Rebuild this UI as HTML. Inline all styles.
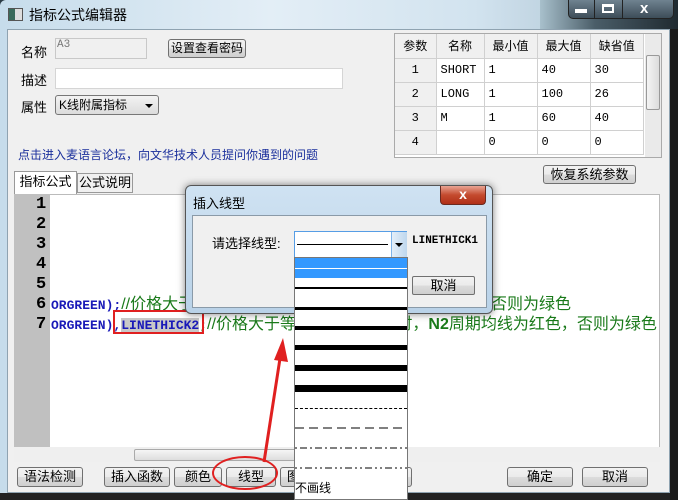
<!DOCTYPE html>
<html><head><meta charset="utf-8"><style>
*{margin:0;padding:0;box-sizing:border-box}
body{width:678px;height:500px;overflow:hidden;background:#2b3a44;font-family:"Liberation Sans","Noto Sans CJK SC",sans-serif;font-size:12px;position:relative}
.a{position:absolute}
.btn{position:absolute;border:1px solid #707070;border-radius:3px;background:linear-gradient(#f2f2f2,#ebebeb 50%,#dcdcdc 51%,#cfcfcf);text-align:center;font-size:13px;color:#000;white-space:nowrap;overflow:hidden}
.mono{font-family:"Liberation Mono","Noto Sans CJK SC",monospace}
td{border-right:1px solid #d0d0d0;border-bottom:1px solid #d0d0d0;height:24px;font-size:12px;padding-left:4px}
.cm{color:#1a7a1a;font-weight:normal;font-family:"Liberation Sans","Noto Sans CJK SC",sans-serif;font-size:16px}
</style></head><body>
<div class="a" style="left:0;top:0;width:678px;height:500px;background:linear-gradient(90deg,#c6dceb,#e3eef6 40%,#d2e3ef 70%,#9fb8c8);border-radius:6px 6px 0 0"></div>
<div class="a" style="left:540px;top:0;width:138px;height:30px;background:linear-gradient(90deg,#a8c0cc,#4a5d68 40%,#1f2a30)"></div>
<div class="a" style="left:8px;top:8px;width:15px;height:13px;border:1px solid #555;background:linear-gradient(90deg,#3a6a5a 45%,#ddd 45%)"></div>
<div class="a" style="left:29px;top:5px;font-size:14px;color:#000">指标公式编辑器</div>
<div class="a" style="left:568px;top:0;width:106px;height:19px;border:1px solid #222;border-top:none;border-radius:0 0 5px 5px;background:linear-gradient(#6f8290,#3d4d58)"></div>
<div class="a" style="left:594px;top:0;width:1px;height:19px;background:#222"></div>
<div class="a" style="left:622px;top:0;width:1px;height:19px;background:#222"></div>
<div class="a" style="left:575px;top:9px;width:12px;height:4px;background:#fff"></div>
<div class="a" style="left:602px;top:4px;width:12px;height:9px;border:2px solid #fff;border-top-width:3px"></div>
<div class="a" style="left:640px;top:0px;color:#fff;font-weight:bold;font-size:15px">x</div>
<div class="a" style="left:7px;top:29px;width:663px;height:464px;background:#f0f0f0;border:1px solid #8fa3b1"></div>
<div class="a" style="left:0;top:493px;width:678px;height:7px;background:#222"></div>
<div class="a" style="left:670px;top:29px;width:8px;height:471px;background:#1a1a1a"></div>

<div class="a" style="left:21px;top:42px;font-size:13px">名称</div>
<div class="a mono" style="left:55px;top:38px;width:92px;height:21px;border:1px solid #c8c8c8;background:#f0f0f0;color:#777;font-size:11px;padding-left:1px">A3</div>
<div class="btn" style="left:168px;top:39px;width:78px;height:19px;font-size:12px;line-height:17px">设置查看密码</div>
<div class="a" style="left:21px;top:70px;font-size:13px">描述</div>
<div class="a" style="left:55px;top:68px;width:288px;height:21px;border:1px solid #d5d5d5;background:#fff"></div>
<div class="a" style="left:21px;top:97px;font-size:13px">属性</div>
<div class="a" style="left:55px;top:95px;width:104px;height:20px;border:1px solid #777;border-radius:3px;background:linear-gradient(#f3f3f3,#dcdcdc);font-size:12px;line-height:18px;padding-left:3px">K线附属指标</div>
<div class="a" style="left:145px;top:104px;border:4px solid transparent;border-top:4px solid #000"></div>
<div class="a" style="left:18px;top:146px;color:#1a2f9c;font-size:12px">点击进入麦语言论坛，向文华技术人员提问你遇到的问题</div>

<div class="a" style="left:394px;top:33px;width:268px;height:125px;border:1px solid #aaa;background:#fff;overflow:hidden">
<table style="border-collapse:collapse;width:249px;text-align:left">
<tr style="background:#f0f0f0"><td style="width:41px;text-align:center;padding:0">参数</td><td style="width:48px;text-align:center;padding:0">名称</td><td style="width:53px;text-align:center;padding:0">最小值</td><td style="width:53px;text-align:center;padding:0">最大值</td><td style="text-align:center;padding:0">缺省值</td></tr>
<tr class="mono"><td style="background:#f0f0f0;text-align:center;padding:0">1</td><td>SHORT</td><td>1</td><td>40</td><td>30</td></tr>
<tr class="mono"><td style="background:#f0f0f0;text-align:center;padding:0">2</td><td>LONG</td><td>1</td><td>100</td><td>26</td></tr>
<tr class="mono"><td style="background:#f0f0f0;text-align:center;padding:0">3</td><td>M</td><td>1</td><td>60</td><td>40</td></tr>
<tr class="mono"><td style="background:#f0f0f0;text-align:center;padding:0">4</td><td></td><td>0</td><td>0</td><td>0</td></tr>
</table>
<div class="a" style="left:250px;top:0;width:17px;height:124px;background:#eaeaea"></div>
<div class="a" style="left:251px;top:21px;width:14px;height:55px;border:1px solid #999;border-radius:2px;background:linear-gradient(90deg,#f4f4f4,#dcdcdc)"></div>
</div>
<div class="btn" style="left:543px;top:165px;width:93px;height:19px;line-height:17px">恢复系统参数</div>

<div class="a" style="left:14px;top:171px;width:63px;height:23px;border:1px solid #999;border-bottom:none;background:#fff;font-size:13px;text-align:center;line-height:20px">指标公式</div>
<div class="a" style="left:77px;top:173px;width:56px;height:20px;border:1px solid #999;background:#f0f0f0;font-size:13px;text-align:center;line-height:18px">公式说明</div>

<div class="a" style="left:14px;top:194px;width:646px;height:268px;background:#fff;border:1px solid #bbb"></div>
<div class="a" style="left:14px;top:194px;width:36px;height:253px;background:#c0c0c0"></div>
<div class="a mono" style="left:36px;top:195px;font-size:17px;line-height:20px;font-weight:bold;color:#000">1<br>2<br>3<br>4<br>5<br>6<br>7</div>
<div class="a mono" style="left:51px;top:295px;font-size:13px;line-height:20px;font-weight:bold;color:#1a1ab8;white-space:nowrap">ORGREEN);<span class="cm">//价格大于等于N1周期均线时，N2周期均线为红色，否则为绿色</span></div>
<div class="a mono" style="left:51px;top:315px;font-size:13px;line-height:20px;font-weight:bold;color:#1a1ab8;white-space:nowrap">ORGREEN),<span style="background:#c8c8c8">LINETHICK2</span><span style="color:#1a7a1a">;</span><span class="cm">//价格大于等于N1周期均线时，<b>N2</b>周期均线为红色，否则为绿色</span></div>
<div class="a" style="left:113px;top:310px;width:91px;height:24px;border:2px solid #e02020"></div>
<div class="a" style="left:14px;top:447px;width:646px;height:15px;background:#efefef"></div>
<div class="a" style="left:134px;top:449px;width:180px;height:12px;border:1px solid #aaa;border-radius:2px;background:linear-gradient(#f5f5f5,#ddd)"></div>

<div class="btn" style="left:17px;top:467px;width:66px;height:20px;line-height:18px">语法检测</div>
<div class="btn" style="left:104px;top:467px;width:66px;height:20px;line-height:18px">插入函数</div>
<div class="btn" style="left:174px;top:467px;width:48px;height:20px;line-height:18px">颜色</div>
<div class="btn" style="left:226px;top:467px;width:50px;height:20px;line-height:18px">线型</div>
<div class="btn" style="left:280px;top:467px;width:66px;height:20px;line-height:18px;text-align:left;padding-left:6px">图</div>
<div class="btn" style="left:346px;top:467px;width:66px;height:20px;line-height:18px;text-align:right;padding-right:5px">号</div>
<div class="btn" style="left:507px;top:467px;width:66px;height:20px;line-height:18px">确定</div>
<div class="btn" style="left:582px;top:467px;width:66px;height:20px;line-height:18px">取消</div>
<div class="a" style="left:212px;top:456px;width:66px;height:34px;border:2px solid #e02020;border-radius:50%"></div>

<svg class="a" style="left:250px;top:330px" width="40" height="140"><path d="M14 132 L31 22" stroke="#e02020" stroke-width="3" fill="none"/><path d="M33 8 L24 30 L38 32 Z" fill="#e02020"/></svg>

<div class="a" style="left:185px;top:185px;width:308px;height:129px;border:1px solid #555;border-radius:6px;background:linear-gradient(#cfe2f2,#b9d2e8);box-shadow:0 0 8px rgba(0,0,0,.5)"></div>
<div class="a" style="left:193px;top:193px;font-size:13px">插入线型</div>
<div class="a" style="left:440px;top:186px;width:46px;height:19px;border-radius:0 0 4px 4px;background:linear-gradient(#e9a493,#c44a2e 50%,#b03018);border:1px solid #6a2a20;border-top:none;color:#fff;text-align:center;font-weight:bold;font-size:14px;line-height:17px">x</div>
<div class="a" style="left:192px;top:215px;width:295px;height:93px;background:#f0f0f0;border:1px solid #8a9aa8"></div>
<div class="a" style="left:212px;top:233px;font-size:13px">请选择线型:</div>
<div class="a" style="left:294px;top:231px;width:113px;height:27px;border:1px solid #569de5;background:#fff"></div>
<div class="a" style="left:297px;top:244px;width:91px;height:1px;background:#000"></div>
<div class="a" style="left:391px;top:232px;width:16px;height:25px;background:linear-gradient(90deg,#e3eef8,#bed7ee);border-left:1px solid #7eb4ea"></div>
<div class="a" style="left:395px;top:243px;border:4px solid transparent;border-top:4px solid #000"></div>
<div class="a mono" style="left:412px;top:235px;font-size:11px;font-weight:bold">LINETHICK1</div>
<div class="btn" style="left:412px;top:276px;width:63px;height:19px;line-height:17px;border-radius:2px">取消</div>

<div class="a" style="left:294px;top:257px;width:114px;height:243px;background:#fff;border:1px solid #777"></div>
<div class="a" style="left:295px;top:258px;width:112px;height:10px;background:#3399ff"></div>
<div class="a" style="left:295px;top:269px;width:112px;height:9px;background:#3399ff"></div>
<div class="a" style="left:295px;top:287px;width:112px;height:2px;background:#000"></div>
<div class="a" style="left:295px;top:307px;width:112px;height:3px;background:#000"></div>
<div class="a" style="left:295px;top:326px;width:112px;height:4px;background:#000"></div>
<div class="a" style="left:295px;top:345px;width:112px;height:5px;background:#000"></div>
<div class="a" style="left:295px;top:365px;width:112px;height:6px;background:#000"></div>
<div class="a" style="left:295px;top:385px;width:112px;height:7px;background:#000"></div>
<div class="a" style="left:295px;top:408px;width:112px;height:0;border-top:1px dashed #000"></div>
<svg class="a" style="left:295px;top:427px" width="112" height="30"><line x1="0" y1="1" x2="112" y2="1" stroke="#000" stroke-dasharray="9,5"/><line x1="0" y1="21" x2="112" y2="21" stroke="#000" stroke-dasharray="2,3,7,3"/></svg>
<svg class="a" style="left:295px;top:467px" width="112" height="3"><line x1="0" y1="1" x2="112" y2="1" stroke="#000" stroke-dasharray="2,3,2,3,7,3"/></svg>
<div class="a" style="left:295px;top:479px;font-size:12px">不画线</div>
</body></html>
